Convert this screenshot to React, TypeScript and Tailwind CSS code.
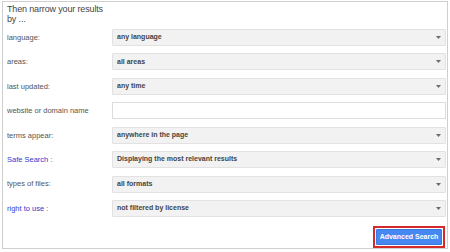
import React from "react";

const rows: { label: string; value?: string; link?: boolean; input?: boolean }[] = [
  { label: "language:", value: "any language" },
  { label: "areas:", value: "all areas" },
  { label: "last updated:", value: "any time" },
  { label: "website or domain name", input: true },
  { label: "terms appear:", value: "anywhere in the page" },
  { label: "Safe Search", value: "Displaying the most relevant results", link: true },
  { label: "types of files:", value: "all formats" },
  { label: "right to use", value: "not filtered by license", link: true },
];

function Arrow() {
  return (
    <svg width="5" height="3" viewBox="0 0 5 3" className="shrink-0">
      <path d="M0 0H5L2.5 3Z" fill="#6b6b6b" />
    </svg>
  );
}

export default function App() {
  return (
    <div
      className="w-[450px] h-[252px] bg-white pt-[1px] pl-[2px]"
      style={{ fontFamily: '"Liberation Sans", Arial, sans-serif' }}
    >
      <div className="w-[446px] h-[248px] border border-[#cfcfcf] flex flex-col">
        <div className="h-[27px] pl-[4px] pt-[2px]">
          <div className="w-[104px] text-[9px] leading-[10px] text-[#444] tracking-[-0.15px]">
            Then narrow your results by ...
          </div>
        </div>
        <div className="flex flex-col gap-[7.43px] pr-[1px]">
          {rows.map((r) => (
            <div key={r.label} className="flex items-center h-[17px]">
              <div className="w-[109px] pl-[4px] text-[7.5px] text-[#555]">
                {r.link ? (
                  <>
                    <span className="text-[#2a3dd1]">{r.label}</span> :
                  </>
                ) : (
                  r.label
                )}
              </div>
              {r.input ? (
                <div className="flex-1 h-[17px] bg-white border border-[#dcdcdc]" />
              ) : (
                <div className="flex-1 h-[17px] bg-[#f2f2f2] border border-[#e2e2e2] rounded-[1px] flex items-center justify-between pl-[4px] pr-[4px]">
                  <span className="text-[7px] font-bold text-[#444]">{r.value}</span>
                  <Arrow />
                </div>
              )}
            </div>
          ))}
        </div>
        <div className="flex-1 flex items-end justify-end pr-[2px]">
          <div className="border-2 border-[#d42a2a] p-[1px] bg-white">
            <div className="w-[66px] h-[16px] bg-[#4688f1] border border-[#3a79e0] rounded-[1px] flex items-center justify-center text-[7px] font-bold text-white">
              Advanced Search
            </div>
          </div>
        </div>
      </div>
    </div>
  );
}
